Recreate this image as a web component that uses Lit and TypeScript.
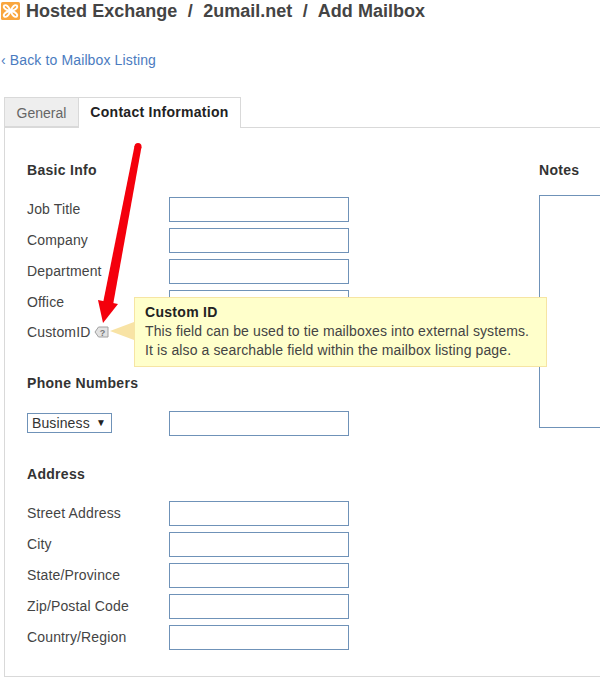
import { LitElement, html, css, svg } from "lit";
import { customElement } from "lit/decorators.js";

@customElement("app-root")
export class AppRoot extends LitElement {
  static styles = css`
    :host { display: block; position: relative; width: 600px; height: 677px; overflow: hidden; background: #fff;
      font-family: "Liberation Sans", Arial, sans-serif; font-size: 14px; color: #444; }
    .title { display: flex; align-items: center; height: 20px; padding: 1px 0 0 1px; font-size: 18px; font-weight: 700; color: #444; white-space: pre; word-spacing: 0.25px; }
    .logo { width: 19px; height: 18px; margin-right: 6px; display: block; }
    .back { display: block; margin: 30px 0 0 1px; height: 18px; line-height: 18px; color: #4a7bc0; text-decoration: none; letter-spacing: 0.13px; }
    .tabs { display: flex; align-items: flex-end; margin: 28px 0 0 4px; height: 31px; position: relative; z-index: 1; }
    .tab { box-sizing: border-box; border: 1px solid #d9d9d9; white-space: nowrap; }
    .tab.off { width: 74px; height: 30px; margin-bottom: 1px; line-height: 30px; text-align: center; background: #eee; color: #666; border-right: 0; }
    .tab.on { width: 163px; height: 31px; line-height: 28px; text-align: center; background: #fff; color: #222; font-weight: 700; letter-spacing: 0.28px; border-bottom: 0; }
    .panel { box-sizing: border-box; margin: -1px 0 0 4px; height: 550px; border: 1px solid #d9d9d9; border-right: 0; display: flex; padding: 34px 0 0 22px; }
    .col { width: 512px; flex: none; }
    h3 { margin: 0; font-size: 14px; line-height: 17px; font-weight: 700; color: #333; letter-spacing: 0.3px; }
    .rows { margin-top: 18px; display: flex; flex-direction: column; gap: 6px; }
    .row { display: flex; align-items: center; height: 25px; position: relative; }
    .row.cust { height: 23px; }
    .lbl { width: 142px; flex: none; color: #444; white-space: nowrap; display: flex; align-items: center; padding-bottom: 2px; letter-spacing: 0.15px; }
    input { box-sizing: border-box; width: 180px; height: 25px; border: 1px solid #6f92b8; background: #fff; margin: 0; padding: 0; }
    .help { margin-left: 4px; display: block; }
    .tip { position: absolute; left: 107px; top: -24px; box-sizing: border-box; width: 413px; height: 70px; padding: 5px 10px; background: #ffffcb; border: 1px solid #f6e5a3; color: #444; line-height: 19px; white-space: nowrap; z-index: 3; letter-spacing: 0.12px; }
    .tip b { display: block; color: #222; letter-spacing: 0.3px; }
    .tip-arrow { position: absolute; left: 83px; top: 1px; display: block; z-index: 3; }
    .sec2 { margin-top: 31px; }
    .sec2 .rows { margin-top: 19px; }
    .sec3 { margin-top: 30px; }
    .sec3 .rows { margin-top: 18px; }
    .sel { box-sizing: border-box; width: 85px; height: 20px; margin-bottom: 2px; border: 1px solid #6f92b8; display: flex; align-items: center; justify-content: space-between; padding: 0 5px 0 4px; color: #333; letter-spacing: 0.12px; }
    .sel span:last-child { font-size: 10px; color: #222; }
    .selcell { width: 142px; flex: none; }
    .notes { flex: none; }
    .ta { box-sizing: border-box; width: 120px; height: 233px; margin-top: 16px; border: 1px solid #6f92b8; border-right: 0; }
    .ink { position: absolute; left: 0; top: 0; pointer-events: none; z-index: 5; }
  `;

  private field(label: string) {
    return html`<div class="row"><span class="lbl">${label}</span><input type="text" /></div>`;
  }

  render() {
    return html`
      <div class="title">
        <svg class="logo" viewBox="0 0 18 18" preserveAspectRatio="none">
          <rect width="18" height="18" rx="1.500" fill="#f9a63e" />
          <g fill="none" stroke="#fff" stroke-width="1.900" stroke-linecap="round">
            <path d="M3 3.500c2-1.200 4 .5 6 5.500 2-5 4-6.700 6-5.500 1.300 2-.5 4-5 5.500 4.500 1.500 6.300 3.500 5 5.500-2 1.200-4-.5-6-5.500-2 5-4 6.700-6 5.500-1.300-2 .5-4 5-5.500C3.500 7.500 1.700 5.500 3 3.500z" />
          </g>
        </svg>
        <span>Hosted Exchange  /  2umail.net  /  Add Mailbox</span>
      </div>
      <a class="back" href="#">‹ Back to Mailbox Listing</a>
      <div class="tabs">
        <div class="tab off">General</div>
        <div class="tab on">Contact Information</div>
      </div>
      <div class="panel">
        <div class="col">
          <h3>Basic Info</h3>
          <div class="rows">
            ${["Job Title", "Company", "Department", "Office"].map((l) => this.field(l))}
            <div class="row cust">
              <span class="lbl">CustomID
                <svg class="help" width="15" height="12" viewBox="0 0 15 12">
                  <path d="M1 6 4.500 1H14v10H4.500z" fill="#e2e2e2" stroke="#a0a0a0" />
                  <text x="8.500" y="9.500" font-size="9" font-weight="700" font-family="Liberation Sans" fill="#777" text-anchor="middle">?</text>
                </svg>
              </span>
              <svg class="tip-arrow" width="24" height="18" viewBox="0 0 24 18"><path d="M0 9 24 0v18z" fill="#f8e3a5" /></svg>
              <div class="tip">
                <b>Custom ID</b>
                This field can be used to tie mailboxes into external systems.<br />
                It is also a searchable field within the mailbox listing page.
              </div>
            </div>
          </div>
          <div class="sec2">
            <h3>Phone Numbers</h3>
            <div class="rows">
              <div class="row">
                <div class="selcell"><div class="sel"><span>Business</span><span>▼</span></div></div>
                <input type="text" />
              </div>
            </div>
          </div>
          <div class="sec3">
            <h3>Address</h3>
            <div class="rows">
              ${["Street Address", "City", "State/Province", "Zip/Postal Code", "Country/Region"].map((l) => this.field(l))}
            </div>
          </div>
        </div>
        <div class="notes">
          <h3>Notes</h3>
          <div class="ta"></div>
        </div>
      </div>
      <svg class="ink" width="600" height="677" viewBox="0 0 600 677">
        ${svg`<circle cx="138" cy="146.500" r="3.500" fill="#f4000c" />
        <path d="M134.500 146 141.500 147 113 305 103 303z" fill="#f4000c" />
        <path d="M98 300 118 304 103 323z" fill="#f4000c" />`}
      </svg>
    `;
  }
}
